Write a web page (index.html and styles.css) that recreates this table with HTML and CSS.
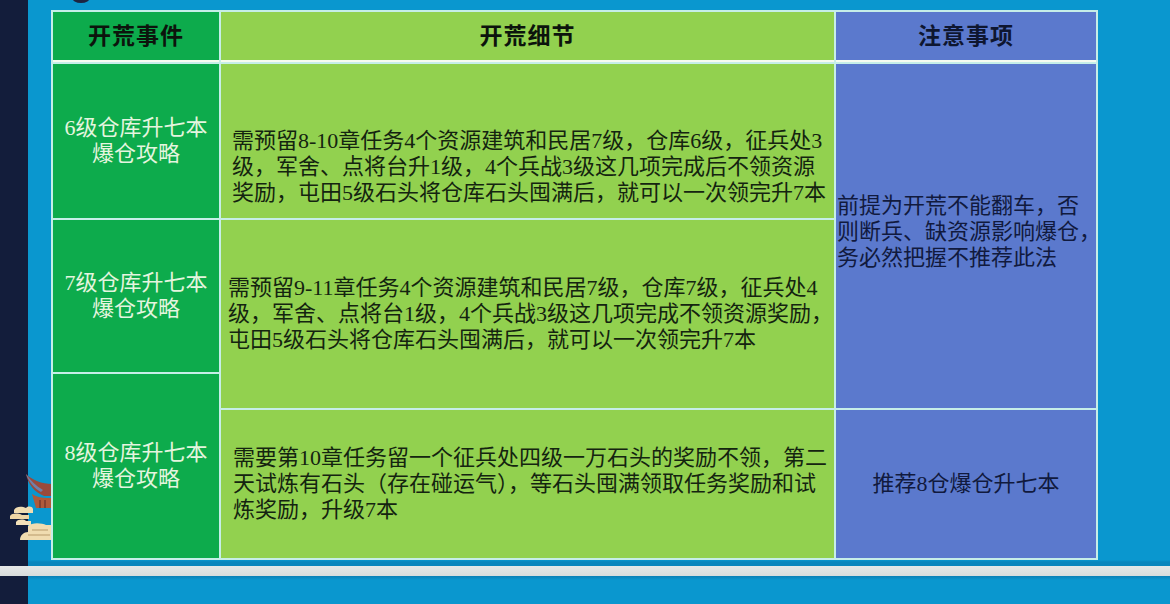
FILE: index.html
```html
<!DOCTYPE html>
<html lang="zh-CN">
<head>
<meta charset="utf-8">
<title>开荒事件</title>
<link rel="stylesheet" href="styles.css">
</head>
<body>
<div class="page">
  <div class="top">
    <div class="strip"></div>
    <main class="stage">
      <div class="table">
        <div class="cell head g1 ah1">开荒事件</div>
        <div class="cell head g2 ah2">开荒细节</div>
        <div class="cell head g3 ah3">注意事项</div>

        <div class="cell event a-e1">6级仓库升七本<br>爆仓攻略</div>
        <div class="cell detail a-d1 detail-low">需预留8-10章任务4个资源建筑和民居7级，仓库6级，征兵处3<br>级，军舍、点将台升1级，4个兵战3级这几项完成后不领资源<br>奖励，屯田5级石头将仓库石头囤满后，就可以一次领完升7本</div>
        <div class="cell note a-n1">前提为开荒不能翻车，否<br>则断兵、缺资源影响爆仓，<br>务必然把握不推荐此法</div>

        <div class="cell event a-e2">7级仓库升七本<br>爆仓攻略</div>
        <div class="cell detail a-d2 detail-tight">需预留9-11章任务4个资源建筑和民居7级，仓库7级，征兵处4<br>级，军舍、点将台1级，4个兵战3级这几项完成不领资源奖励，<br>屯田5级石头将仓库石头囤满后，就可以一次领完升7本</div>

        <div class="cell event a-e3">8级仓库升七本<br>爆仓攻略</div>
        <div class="cell detail a-d3">需要第10章任务留一个征兵处四级一万石头的奖励不领，第二<br>天试炼有石头（存在碰运气），等石头囤满领取任务奖励和试<br>炼奖励，升级7本</div>
        <div class="cell note note-center a-n3">推荐8仓爆仓升七本</div>
      </div>
    </main>
  </div>
  <div class="bar"></div>
  <div class="bottom">
    <div class="strip"></div>
    <div class="stage-bottom"></div>
  </div>

  <span class="top-mark"></span>
  <svg class="deco" width="44" height="80" viewBox="0 0 44 80" aria-hidden="true">
    <path d="M18 6 C20 16 26 24 36 28 L44 28 L44 16 C34 16 24 12 18 6 Z" fill="#9a4a3c"/>
    <path d="M18 6 C21 14 26 20 33 24 L35 22 C28 18 22 12 18 6 Z" fill="#7080aa"/>
    <path d="M24 26 C30 30 36 30 44 30 L44 40 L28 40 Z" fill="#b05a3a"/>
    <path d="M32 32 L32 40 M37 32 L37 40" stroke="#7a3a2c" stroke-width="1.5"/>
    <path d="M6 42 C8 38 14 38 18 40 C20 38 24 38 25 41 L25 45 L6 45 Z" fill="#f1ddb2"/>
    <path d="M2 48 C4 45 10 45 14 47 L21 47 L21 51 L2 51 Z" fill="#efd6a6"/>
    <path d="M8 54 C10 51 16 51 18 53 L23 53 L23 57 L8 57 Z" fill="#f3e1ba"/>
    <path d="M20 58 C24 54 34 55 38 57 L44 57 L44 72 L12 72 C12 67 16 64 20 64 Z" fill="#f0dcb0"/>
    <path d="M24 62 L40 62 M20 67 L42 67" stroke="#b89a6a" stroke-width="1"/>
  </svg>
</div>
</body>
</html>
```

FILE: styles.css
```css
html, body {
  margin: 0;
  padding: 0;
}

body {
  width: 1170px;
  height: 604px;
  overflow: hidden;
  background: #0a97cf;
}

.page {
  position: relative;
  width: 1170px;
  height: 604px;
  display: flex;
  flex-direction: column;
}

.top {
  height: 566px;
  display: flex;
}

.strip {
  width: 28px;
  flex: 0 0 28px;
  background: #131d3b;
}

.stage {
  flex: 1;
  padding: 10px 0 0 23px;
  background: linear-gradient(to bottom, #0a97cf 0, #0a97cf 560px, #0a86bd 562px, #0a86bd 566px);
}

.bar {
  height: 10px;
  background: linear-gradient(to bottom, #e6e8e8 0, #d8dcdc 100%);
  position: relative;
  z-index: 3;
}

.bottom {
  flex: 1;
  display: flex;
}

.stage-bottom {
  flex: 1;
  background: linear-gradient(to bottom, #0b80b6 0, #0a97cf 4px);
}

.table {
  position: relative;
  z-index: 2;
  width: 1047px;
  height: 550px;
  box-sizing: border-box;
  padding: 2px;
  background: #c6eee8;
  display: grid;
  grid-template-columns: 166px 613px 260px;
  grid-template-rows: 50px 154px 152px 34px 148px;
  column-gap: 2px;
  row-gap: 2px;
  grid-template-areas:
    "h1 h2 h3"
    "e1 d1 n1"
    "e2 d2 n1"
    "e3 d2 n1"
    "e3 d3 n3";
}

.ah1 { grid-area: h1; }
.ah2 { grid-area: h2; }
.ah3 { grid-area: h3; }
.a-e1 { grid-area: e1; }
.a-e2 { grid-area: e2; }
.a-e3 { grid-area: e3; }
.a-d1 { grid-area: d1; }
.a-d2 { grid-area: d2; }
.a-d3 { grid-area: d3; }
.a-n1 { grid-area: n1; }
.a-n3 { grid-area: n3; }

.cell {
  display: flex;
  align-items: center;
  white-space: nowrap;
  font-size: 22px;
  line-height: 26px;
  font-family: "Liberation Serif", "Noto Sans CJK SC", serif;
}

.g1, .event { background: #0dab4c; }
.g2, .detail { background: #92d14f; }
.g3, .note { background: #5b79cd; }

.head {
  justify-content: center;
  box-sizing: border-box;
  border-bottom: 2px solid #f6fbf0;
  font-family: "Noto Sans CJK SC", sans-serif;
  font-weight: 700;
  font-size: 23px;
  letter-spacing: 1px;
  padding-bottom: 4px;
  color: #0c140c;
}

.g3 {
  color: #0e1630;
}

.event {
  justify-content: center;
  text-align: center;
  color: #e4f5df;
  font-weight: 400;
}

.detail {
  color: #142410;
  padding-left: 11px;
}

.detail-low {
  padding-top: 52px;
}

.detail-tight {
  padding-left: 7px;
}

.note {
  color: #111a3e;
  padding-left: 1px;
  overflow: visible;
}

.a-n1 {
  padding-bottom: 8px;
}

.note-center {
  justify-content: center;
  padding-left: 0;
}

.a-d3 {
  padding-left: 12px;
}

.top-mark {
  position: absolute;
  left: 72px;
  top: -8px;
  width: 18px;
  height: 11px;
  border-radius: 50%;
  background: #1d2440;
  z-index: 2;
}

.deco {
  position: absolute;
  left: 8px;
  top: 468px;
  z-index: 1;
}
```
